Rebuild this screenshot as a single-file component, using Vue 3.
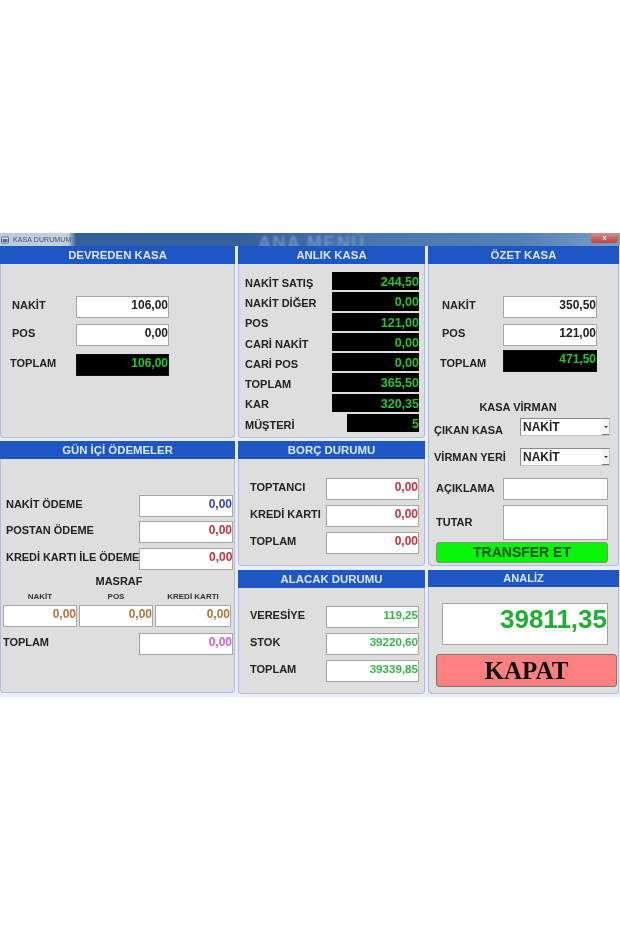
<script setup>
const anlik = [
  { label: 'NAKİT SATIŞ', value: '244,50' },
  { label: 'NAKİT DİĞER', value: '0,00' },
  { label: 'POS', value: '121,00' },
  { label: 'CARİ NAKİT', value: '0,00' },
  { label: 'CARİ POS', value: '0,00' },
  { label: 'TOPLAM', value: '365,50' },
  { label: 'KAR', value: '320,35' },
  { label: 'MÜŞTERİ', value: '5', short: true },
]
const borc = [
  { label: 'TOPTANCI', value: '0,00' },
  { label: 'KREDİ KARTI', value: '0,00' },
  { label: 'TOPLAM', value: '0,00' },
]
const alacak = [
  { label: 'VERESİYE', value: '119,25' },
  { label: 'STOK', value: '39220,60' },
  { label: 'TOPLAM', value: '39339,85' },
]
const odemeler = [
  { label: 'NAKİT ÖDEME', value: '0,00', cls: 'blue' },
  { label: 'POSTAN ÖDEME', value: '0,00', cls: 'red' },
  { label: 'KREDİ KARTI İLE ÖDEME', value: '0,00', cls: 'red' },
]
const masraf = [
  { label: 'NAKİT', value: '0,00' },
  { label: 'POS', value: '0,00' },
  { label: 'KREDİ KARTI', value: '0,00' },
]
</script>

<template>
  <div class="page">
    <div class="window">
      <div class="titlebar">
        <svg class="appicon" width="8" height="8" viewBox="0 0 8 8">
          <rect x="0.5" y="1" width="7" height="6" rx="1" fill="#dfe6ee" stroke="#44536a" stroke-width="0.8" />
          <rect x="1.5" y="3" width="5" height="3" fill="#4d6f96" />
        </svg>
        <span class="title">KASA DURUMUM</span>
        <span class="ghost">ANA MENÜ</span>
        <span class="close">x</span>
      </div>
      <div class="columns">
        <div class="col col1">
          <section class="panel p-devreden">
            <h2>DEVREDEN KASA</h2>
            <div class="body devreden">
              <div class="row mb6"><label class="l12 w76">NAKİT</label><output class="box w93">106,00</output></div>
              <div class="row mb8"><label class="l12 w76">POS</label><output class="box w93">0,00</output></div>
              <div class="row"><label class="l10 w76">TOPLAM</label><output class="box w93 dark">106,00</output></div>
            </div>
          </section>
          <section class="panel p-gun">
            <h2>GÜN İÇİ ÖDEMELER</h2>
            <div class="body gun">
              <div v-for="o in odemeler" :key="o.label" class="row pay">
                <label class="paylabel">{{ o.label }}</label>
                <output class="box w94" :class="o.cls">{{ o.value }}</output>
              </div>
              <div class="masraf">MASRAF</div>
              <div class="masraf-grid">
                <div v-for="m in masraf" :key="m.label" class="masraf-cell">
                  <span class="mini">{{ m.label }}</span>
                  <output class="box brown">{{ m.value }}</output>
                </div>
              </div>
              <div class="row gun-total">
                <label class="paylabel tot">TOPLAM</label>
                <output class="box w94 pink">0,00</output>
              </div>
            </div>
          </section>
        </div>

        <div class="col col2">
          <section class="panel p-anlik">
            <h2>ANLIK KASA</h2>
            <div class="body anlik">
              <div v-for="r in anlik" :key="r.label" class="anlik-row">
                <label>{{ r.label }}</label>
                <output class="box dark flat" :class="{ short: r.short }">{{ r.value }}</output>
              </div>
            </div>
          </section>
          <section class="panel p-borc">
            <h2>BORÇ DURUMU</h2>
            <div class="body trio">
              <div v-for="r in borc" :key="r.label" class="trio-row">
                <label>{{ r.label }}</label>
                <output class="box red">{{ r.value }}</output>
              </div>
            </div>
          </section>
          <section class="panel p-alacak">
            <h2>ALACAK DURUMU</h2>
            <div class="body trio alacak">
              <div v-for="r in alacak" :key="r.label" class="trio-row">
                <label>{{ r.label }}</label>
                <output class="box green">{{ r.value }}</output>
              </div>
            </div>
          </section>
        </div>

        <div class="col col3">
          <section class="panel p-ozet">
            <h2>ÖZET KASA</h2>
            <div class="body ozet">
              <div class="row mb6"><label class="oz-l">NAKİT</label><output class="box w94">350,50</output></div>
              <div class="row mb4"><label class="oz-l">POS</label><output class="box w94">121,00</output></div>
              <div class="row"><label class="oz-l tl">TOPLAM</label><output class="box w94 dark">471,50</output></div>
              <div class="virman">KASA VİRMAN</div>
              <div class="sel-row">
                <label>ÇIKAN KASA</label>
                <div class="select"><span>NAKİT</span><i class="arrow"></i></div>
              </div>
              <div class="sel-row second">
                <label>VİRMAN YERİ</label>
                <div class="select"><span>NAKİT</span><i class="arrow"></i></div>
              </div>
              <div class="row aciklama"><label class="ac-l">AÇIKLAMA</label><div class="box w105"></div></div>
              <div class="row tutar"><label class="ac-l">TUTAR</label><div class="box w105"></div></div>
              <button class="transfer">TRANSFER ET</button>
            </div>
          </section>
          <section class="panel p-analiz">
            <h2 class="small">ANALİZ</h2>
            <div class="body analiz">
              <output class="box big">39811,35</output>
              <button class="kapat">KAPAT</button>
            </div>
          </section>
        </div>
      </div>
    </div>
  </div>
</template>

<style>
html, body { margin: 0; background: #fff; }
</style>

<style scoped>
.page {
  width: 620px;
  height: 930px;
  padding-top: 233px;
  box-sizing: border-box;
  background: #fff;
  overflow: hidden;
  font-family: "Liberation Sans", Arial, sans-serif;
  filter: blur(0.45px);
}
.window { width: 620px; height: 464px; background: #e9edf7; }
.titlebar {
  position: relative;
  height: 13px;
  display: flex;
  align-items: center;
  gap: 4px;
  padding-left: 1px;
  overflow: hidden;
  background: linear-gradient(90deg, #b9cbe0 0, #c2d0e2 68px, #35609e 76px, #35609d 250px, #4a77b0 380px, #5480b6 520px, #7c9dc6 620px);
}
.appicon { flex: none; }
.title { font-size: 7px; color: #46525f; letter-spacing: 0.1px; }
.ghost {
  position: absolute;
  left: 258px;
  top: 4px;
  font-size: 18px;
  font-weight: 700;
  line-height: 12px;
  letter-spacing: 1.4px;
  white-space: nowrap;
  color: #6f92c4;
  filter: blur(0.8px);
}
.close {
  position: absolute;
  right: 2px;
  top: 0;
  width: 27px;
  height: 10px;
  border-radius: 0 0 3px 3px;
  background: linear-gradient(#c9908c, #c4423a);
  color: #fff;
  font-size: 7px;
  font-weight: 700;
  line-height: 9px;
  text-align: center;
}
.columns { display: flex; gap: 3px; height: 451px; }
.col { display: flex; flex-direction: column; gap: 3px; }
.col1 { width: 235px; }
.col2 { width: 187px; }
.col3 { width: 191px; margin-right: 1px; }
.panel {
  box-sizing: border-box;
  background: #dedede;
  border: 1px solid #b0bbe0;
  border-top: 0;
  border-radius: 0 0 4px 4px;
}
.p-devreden, .p-anlik { height: 192px; }
.p-gun { height: 252px; }
.p-borc { height: 125px; }
.p-ozet { height: 320px; }
.p-alacak, .p-analiz { margin-top: 1px; height: 124px; }
h2 {
  margin: 0 -1px;
  height: 18px;
  background: #1e56c4;
  color: #dde6f7;
  font-size: 11.4px;
  font-weight: 700;
  line-height: 18px;
  text-align: center;
}
h2.small { font-size: 11px; height: 17px; line-height: 17px; }
.body { box-sizing: border-box; }
.row { display: flex; align-items: center; }
.mb4 { margin-bottom: 4px; }
.mb6 { margin-bottom: 6px; }
.mb8 { margin-bottom: 8px; }
label { font-size: 11px; font-weight: 700; color: #222; white-space: nowrap; }
.row > label, .trio-row > label { padding-bottom: 4px; }
.box {
  display: block;
  box-sizing: border-box;
  height: 22px;
  background: #fff;
  border: 1px solid #a6a6a6;
  color: #222;
  font-size: 12px;
  font-weight: 700;
  line-height: 16px;
  text-align: right;
  flex: none;
}
.dark { background: #000; border-color: #111; color: #25c526; }
.w93 { width: 93px; }
.w94 { width: 94px; }
.w105 { width: 105px; }
.blue { color: #3a3fc0; }
.red { color: #c8323a; }
.brown { color: #b8733a; }
.pink { color: #d35fe0; }
.green { color: #39b54a; font-size: 11.6px; }

.devreden { padding-top: 32px; }
.w76 { flex: none; box-sizing: border-box; width: 75px; }
.l12 { padding-left: 11px; }
.l10 { padding-left: 9px; }

.gun { padding-top: 36px; }
.pay { margin-bottom: 4px; }
.pay:nth-child(2) { margin-bottom: 5px; }
.pay:nth-child(3) { margin-bottom: 0; }
.row > .paylabel { flex: 1; padding-left: 5px; font-size: 11px; letter-spacing: -0.05px; }
.row > .tot { padding-left: 2px; }
.gun .w94 { margin-right: 1px; }
.masraf { font-size: 11px; font-weight: 700; color: #222; text-align: center; margin-top: 3px; line-height: 16px; padding-left: 3px; }
.masraf-grid { display: grid; grid-template-columns: 74px 74px 76px; gap: 2px; padding-left: 2px; margin-top: 3px; }
.masraf-cell { display: flex; flex-direction: column; align-items: center; }
.mini { font-size: 8px; font-weight: 700; color: #333; line-height: 10px; height: 10px; margin-bottom: 3px; }
.masraf-cell .box { width: 100%; }
.gun-total { margin-top: 6px; }

.anlik { padding-top: 8px; display: flex; flex-direction: column; gap: 2px; }
.anlik-row { display: flex; align-items: center; justify-content: space-between; height: 18.3px; padding: 0 5px 0 6px; }
.anlik-row label { padding-top: 3px; }
.flat { height: 18.3px; width: 87px; border: 0; padding-top: 3px; line-height: 15px; font-size: 12.5px; }
.flat.short { width: 72px; }

.trio { padding-top: 19px; display: flex; flex-direction: column; gap: 5px; }
.trio.alacak { padding-top: 18px; }
.trio-row { display: flex; align-items: center; justify-content: space-between; padding: 0 5px 0 11px; }
.trio-row .box { width: 93px; }

.ozet { padding-top: 32px; }
.row > .oz-l { box-sizing: border-box; width: 74px; padding-left: 13px; flex: none; }
.row > .oz-l.tl { padding: 3px 0 0 11px; }
.virman { font-size: 11px; font-weight: 700; color: #222; text-align: center; margin-top: 28px; line-height: 14px; padding-right: 11px; }
.sel-row { display: flex; align-items: center; justify-content: space-between; margin-top: 4px; padding: 0 8px 0 5px; height: 18px; }
.sel-row label { padding-top: 6px; }
.sel-row.second { margin-top: 12px; }
.sel-row.second label { padding-top: 0; }
.select {
  box-sizing: border-box;
  width: 90px;
  height: 18px;
  background: #fff;
  border: 1px solid #c4c4c4;
  border-top-color: #8a8a8a;
  border-left-color: #8a8a8a;
  display: flex;
  align-items: center;
  justify-content: space-between;
  padding: 0 0 0 2px;
  font-size: 12px;
  font-weight: 700;
  color: #222;
}
.arrow {
  display: flex;
  align-items: center;
  justify-content: center;
  box-sizing: border-box;
  width: 7px;
  height: 16px;
  background: #f4f4f4;
  border-bottom: 1px solid #777;
}
.arrow::before {
  content: "";
  border-left: 2px solid transparent;
  border-right: 2px solid transparent;
  border-top: 2px solid #333;
}
.aciklama { margin-top: 12px; }
.row > .ac-l { box-sizing: border-box; width: 74px; padding-left: 7px; padding-bottom: 2px; flex: none; }
.tutar { margin-top: 5px; height: 35px; }
.tutar .box { height: 35px; }
.transfer {
  display: block;
  box-sizing: border-box;
  margin: 2px 0 0 7px;
  width: 172px;
  height: 21px;
  background: #08f508;
  border: 1px solid #6f9f6f;
  border-radius: 3px;
  padding: 0;
  font: 700 14px/19px "Liberation Sans", Arial, sans-serif;
  color: #15501f;
}

.analiz { padding: 16px 0 0 13px; }
.big {
  width: 166px;
  height: 42px;
  font-size: 26px;
  line-height: 30px;
  color: #22ad33;
}
.kapat {
  display: block;
  box-sizing: border-box;
  margin: 9px 0 0 -6px;
  width: 181px;
  height: 33px;
  background: #ff8080;
  border: 1px solid #777;
  border-radius: 3px;
  padding: 0;
  font: 700 25px/31px "Liberation Serif", "Times New Roman", serif;
  color: #111;
}
</style>
